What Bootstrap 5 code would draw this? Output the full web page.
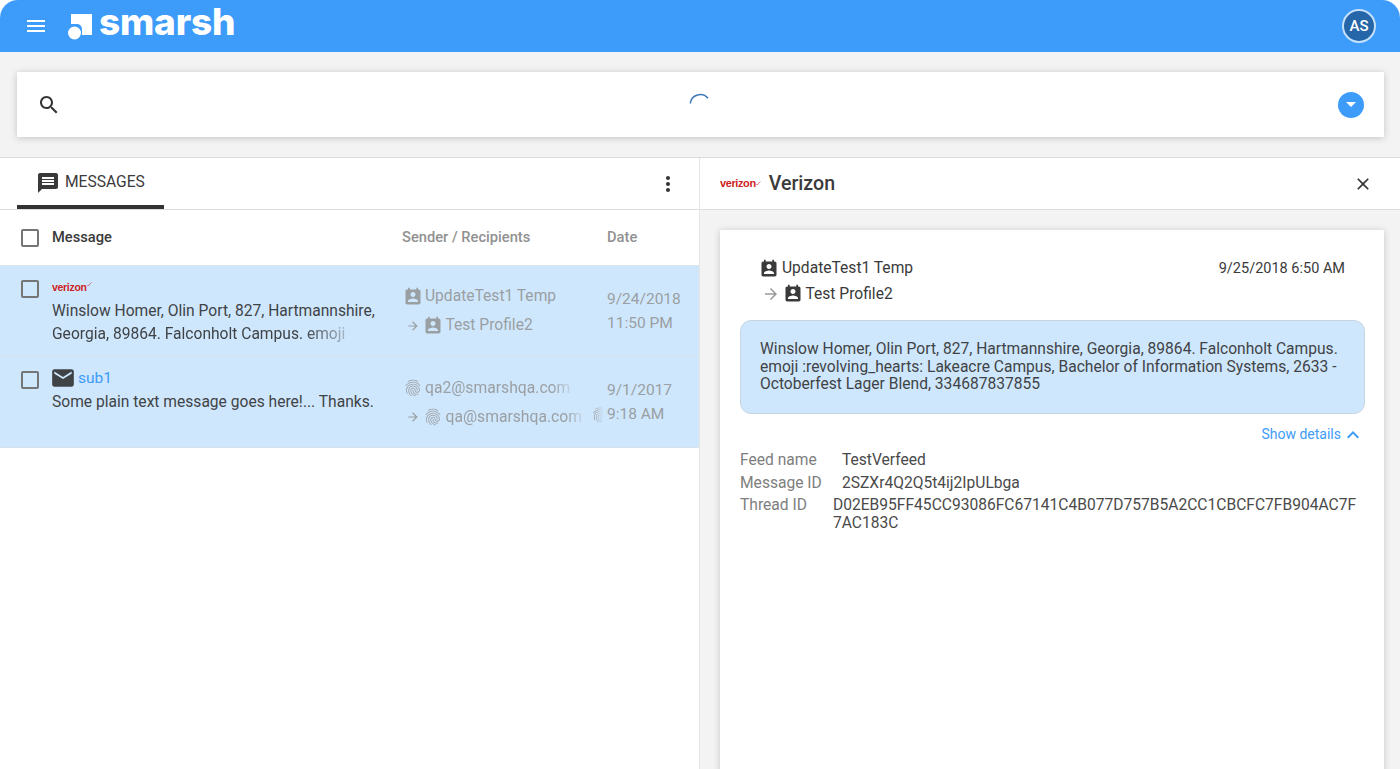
<!DOCTYPE html>
<html lang="en">
<head>
<meta charset="utf-8">
<title>Smarsh</title>
<link href="https://cdn.jsdelivr.net/npm/bootstrap@5.3.0/dist/css/bootstrap.min.css" rel="stylesheet">
<style>
html,body{height:100%}
body{font-family:Roboto,"Liberation Sans",sans-serif;color:#3a3a3a;background:#fff;overflow:hidden;font-size:15.6px}
.app-shell{height:769px}
.top-bar{height:52px;background:#3d9bf9;border-radius:18px 18px 0 0;padding:0 24px;flex:none}
.ic{fill:currentColor;flex:none;display:block}
.brand-mark{margin-left:20px}
.brand-text{font-family:Inter,sans-serif;font-weight:800;font-size:37px;line-height:1;color:#fff;margin-left:7px;letter-spacing:-.2px;position:relative;top:-5px}
.user-chip{width:34px;height:34px;border-radius:50%;background:#2566a8;border:2px solid #c5e0fb;color:#fff;font-weight:500;font-size:15px}
.search-zone{background:#f3f3f3;height:106px;padding:20px 16px 20px 17px;border-bottom:1px solid #dcdcdc;flex:none}
.search-card{height:65px;background:#fff;box-shadow:0 1px 7px rgba(0,0,0,.2);padding:0 20px}
.spin-wrap{margin-top:-1px}
.drop-btn{width:26px;height:26px;border-radius:50%;background:#3d9bf9}
.drop-tri{width:0;height:0;border-left:5px solid transparent;border-right:5px solid transparent;border-top:5px solid #fff}
.work-area{flex:1;min-height:0}
.list-pane{height:100%;background:#fff;border-right:1px solid #e6e6e6}
.pane-head{height:52px;border-bottom:1px solid #dcdcdc}
.tab-item{margin-left:17px;width:147px;height:51px;border-bottom:4px solid #333;padding:2px 0 0 19px;gap:5px;color:#3a3a3a}
.kebab{margin:14px 19px 0 0;color:#333}
.col-head{height:56px;font-size:14.7px;font-weight:500;color:#919191;border-bottom:1px solid #dfe6ea}
.col-first{color:#3a3a3a}
.tick-box{width:18px;height:18px;border:2px solid #757575;border-radius:2px;flex:none;margin-left:21px;margin-right:13px}
.c-msg{width:350px;flex:none}
.c-who{width:205px;flex:none}
.msg-row{height:91px;background:#cfe7fd;border-bottom:1px solid #d7e0e8;padding-top:14px;line-height:23px;color:#3f4346}
.msg-top{height:20px}
.mini-vz{font-family:"Liberation Sans",sans-serif;font-weight:700;color:#cd1f25;font-size:10.5px;letter-spacing:-.3px;line-height:1}
.msg-top .mini-vz{margin-top:2px}
.big-vz{font-size:11px;letter-spacing:-.4px}
.vz-tick{margin-top:2px}
.mail-ic{margin:-6px 0 0 -2px}
.sub-link{color:#3d9bf9;font-size:15.5px;margin-left:2px;line-height:14px}
.fade-a{display:inline-block;-webkit-mask-image:linear-gradient(90deg,#000 86%,rgba(0,0,0,.3));mask-image:linear-gradient(90deg,#000 86%,rgba(0,0,0,.3))}
.fade-b{display:inline-block;font-size:15.7px;-webkit-mask-image:linear-gradient(90deg,#000 88%,rgba(0,0,0,.25));mask-image:linear-gradient(90deg,#000 88%,rgba(0,0,0,.25))}
.c-who-cell{color:#9a9fa3;padding-left:1px;padding-top:2px}
.who-line{height:29px}
.who-icon{margin-right:2px}
.who-next{margin-right:3px}
.who-line .arrow-slot{margin-left:3px;margin-right:2.5px}
.date-cell{color:#9a9fa3;font-size:15.5px;padding-top:7px;position:relative;line-height:24px}
.fp-ghost{position:absolute;left:-16px;top:35px;width:12px;overflow:hidden;-webkit-mask-image:linear-gradient(90deg,#000 30%,rgba(0,0,0,.1));mask-image:linear-gradient(90deg,#000 30%,rgba(0,0,0,.1))}
.detail-pane{height:100%;background:#f3f3f3}
.detail-head{background:#fff;padding:0 27.5px 0 20px}
.detail-title{font-size:19.6px;font-weight:500;color:#3a3a3a;margin-left:8px}
.detail-card{background:#fff;margin:20px 16px 0 20px;height:559px;box-shadow:0 1px 7px rgba(0,0,0,.2);padding:26px 19px 0 20px}
.who-block{padding:0 20px 0 19px;height:64px;line-height:25.5px}
.who-when{font-size:14.5px;line-height:22px;padding-top:2px}
.card-icon{margin-right:3px}
.card-arrow{margin-left:3px;margin-right:2.5px}
.bubble{height:94px;background:#cfe7fd;border:1px solid #c6d5e2;border-radius:11px;padding:20px 19px 0;line-height:17.5px;color:#3f4346}
.more-link{color:#3d9bf9;font-size:14px;height:37px;padding-top:10px}
.more-link .ic{margin-top:-1px}
.facts{font-size:15.6px;line-height:17.5px;color:#4a4a4a;padding-top:1px}
.fact-row{margin-bottom:5px}
.fact-key{color:#7e7e7e;width:102px;flex:none}
.fact-key-s{width:93px}
.fact-val-wrap{width:530px;word-break:break-all}
</style>
</head>
<body>
<svg width="0" height="0" class="d-block position-absolute">
<defs>
<symbol id="i-menu" viewBox="0 0 24 24"><path d="M3 18h18v-2H3v2zm0-5h18v-2H3v2zm0-7v2h18V6H3z"/></symbol>
<symbol id="i-search" viewBox="0 0 24 24"><path d="M15.5 14h-.79l-.28-.27C15.41 12.59 16 11.11 16 9.5 16 5.91 13.09 3 9.5 3S3 5.91 3 9.5 5.91 16 9.5 16c1.61 0 3.09-.59 4.23-1.57l.27.28v.79l5 4.99L20.49 19l-4.99-5zm-6 0C7.01 14 5 11.99 5 9.5S7.01 5 9.5 5 14 7.01 14 9.5 11.99 14 9.5 14z"/></symbol>
<symbol id="i-msg" viewBox="0 0 24 24"><path d="M20 2H4c-1.1 0-1.99.9-1.99 2L2 22l4-4h14c1.1 0 2-.9 2-2V4c0-1.1-.9-2-2-2zm-2 12H6v-2h12v2zm0-3H6V9h12v2zm0-3H6V6h12v2z"/></symbol>
<symbol id="i-more" viewBox="0 0 24 24"><path d="M12 8c1.1 0 2-.9 2-2s-.9-2-2-2-2 .9-2 2 .9 2 2 2zm0 2c-1.1 0-2 .9-2 2s.9 2 2 2 2-.9 2-2-.9-2-2-2zm0 6c-1.1 0-2 .9-2 2s.9 2 2 2 2-.9 2-2-.9-2-2-2z"/></symbol>
<symbol id="i-close" viewBox="0 0 24 24"><path d="M19 6.41L17.59 5 12 10.59 6.41 5 5 6.41 10.59 12 5 17.59 6.41 19 12 13.41 17.59 19 19 17.59 13.41 12z"/></symbol>
<symbol id="i-mail" viewBox="0 0 24 24"><path d="M20 4H4c-1.1 0-1.99.9-1.99 2L2 18c0 1.1.9 2 2 2h16c1.1 0 2-.9 2-2V6c0-1.1-.9-2-2-2zm0 4l-8 5-8-5V6l8 5 8-5v2z"/></symbol>
<symbol id="i-person" viewBox="0 0 24 24"><path d="M19 3h-1V1h-2v2H8V1H6v2H5c-1.11 0-2 .9-2 2v14c0 1.1.89 2 2 2h14c1.1 0 2-.9 2-2V5c0-1.1-.9-2-2-2zm-7 3c1.66 0 3 1.34 3 3s-1.34 3-3 3-3-1.34-3-3 1.34-3 3-3zm6 12H6v-1c0-2 4-3.1 6-3.1s6 1.1 6 3.1v1z"/></symbol>
<symbol id="i-finger" viewBox="0 0 24 24"><path d="M17.81 4.47c-.08 0-.16-.02-.23-.06C15.66 3.42 14 3 12.01 3c-1.98 0-3.86.47-5.57 1.41-.24.13-.54.04-.68-.2-.13-.24-.04-.55.2-.68C7.82 2.52 9.86 2 12.01 2c2.13 0 3.99.47 6.03 1.52.25.13.34.43.21.67-.09.18-.26.28-.44.28zM3.5 9.72c-.1 0-.2-.03-.29-.09-.23-.16-.28-.47-.12-.7.99-1.4 2.25-2.5 3.75-3.27C9.98 4.04 14 4.03 17.15 5.65c1.5.77 2.76 1.86 3.75 3.25.16.22.11.54-.12.7-.23.16-.54.11-.7-.12-.9-1.26-2.04-2.25-3.39-2.94-2.87-1.47-6.54-1.47-9.4.01-1.36.7-2.5 1.7-3.4 2.96-.08.14-.23.21-.39.21zm6.25 12.07c-.13 0-.26-.05-.35-.15-.87-.87-1.34-1.43-2.01-2.64-.69-1.23-1.05-2.73-1.05-4.34 0-2.97 2.54-5.39 5.66-5.39s5.66 2.42 5.66 5.39c0 .28-.22.5-.5.5s-.5-.22-.5-.5c0-2.42-2.09-4.39-4.66-4.39-2.57 0-4.66 1.97-4.66 4.39 0 1.44.32 2.77.93 3.85.64 1.15 1.08 1.64 1.85 2.42.19.2.19.51 0 .71-.11.1-.24.15-.37.15zm7.17-1.85c-1.19 0-2.24-.3-3.1-.89-1.49-1.01-2.38-2.65-2.38-4.39 0-.28.22-.5.5-.5s.5.22.5.5c0 1.41.72 2.74 1.94 3.56.71.48 1.54.71 2.54.71.24 0 .64-.03 1.04-.1.27-.05.53.13.58.41.05.27-.13.53-.41.58-.57.11-1.07.12-1.21.12zM14.91 22c-.04 0-.09-.01-.13-.02-1.59-.44-2.63-1.03-3.72-2.1-1.4-1.39-2.17-3.24-2.17-5.22 0-1.62 1.38-2.94 3.08-2.94 1.7 0 3.08 1.32 3.08 2.94 0 1.07.93 1.94 2.08 1.94s2.08-.87 2.08-1.94c0-3.77-3.25-6.83-7.25-6.83-2.84 0-5.44 1.58-6.61 4.03-.39.81-.59 1.76-.59 2.8 0 .78.07 2.01.67 3.61.1.26-.03.55-.29.64-.26.1-.55-.04-.64-.29-.49-1.31-.73-2.61-.73-3.96 0-1.2.23-2.29.68-3.24 1.33-2.79 4.28-4.6 7.51-4.6 4.55 0 8.25 3.51 8.25 7.83 0 1.62-1.38 2.94-3.08 2.94s-3.08-1.32-3.08-2.94c0-1.07-.93-1.94-2.08-1.94s-2.08.87-2.08 1.94c0 1.71.66 3.31 1.87 4.51.95.94 1.86 1.46 3.27 1.85.27.07.42.35.35.61-.05.23-.26.38-.47.38z"/></symbol>
<symbol id="i-arrow" viewBox="0 0 24 24"><path d="M12 4l-1.41 1.41L16.17 11H4v2h12.17l-5.58 5.59L12 20l8-8z"/></symbol>
<symbol id="i-up" viewBox="0 0 24 24"><path d="M7.41 15.41L12 10.83l4.59 4.58L18 14l-6-6-6 6z"/></symbol>
<symbol id="i-tick" viewBox="0 0 10 10"><path d="M1 6l1.500 2L8.500 1" fill="none" stroke="#cd1f25" stroke-width="1.200"/></symbol>
</defs>
</svg>

<div class="app-shell d-flex flex-column">
  <header class="top-bar d-flex align-items-center">
    <svg class="ic text-white" width="24" height="24"><use href="#i-menu"/></svg>
    <svg class="brand-mark" width="24" height="27" viewBox="0 0 24 27"><path d="M3 1h21v21H14v-6a5 5 0 0 0-5-5H3z" fill="#fff"/><circle cx="6.500" cy="20" r="6.500" fill="#fff"/></svg>
    <span class="brand-text">smarsh</span>
    <div class="user-chip d-flex align-items-center justify-content-center ms-auto">AS</div>
  </header>

  <section class="search-zone">
    <div class="search-card d-flex align-items-center justify-content-between">
      <svg class="ic" width="24" height="24" color="#333"><use href="#i-search"/></svg>
      <svg class="spin-wrap" width="24" height="24" viewBox="0 0 24 24"><path d="M2.300 11.500A10 10 0 0 1 20 6.200" fill="none" stroke="#3d78bb" stroke-width="1.500"/></svg>
      <div class="drop-btn d-flex align-items-center justify-content-center"><span class="drop-tri"></span></div>
    </div>
  </section>

  <main class="row g-0 work-area">
    <div class="col-6">
      <div class="list-pane">
        <div class="pane-head d-flex align-items-start justify-content-between">
          <div class="tab-item d-flex align-items-center">
            <svg class="ic" width="24" height="24"><use href="#i-msg"/></svg><span>MESSAGES</span>
          </div>
          <svg class="ic kebab" width="24" height="24"><use href="#i-more"/></svg>
        </div>
        <div class="col-head d-flex align-items-center">
          <span class="tick-box"></span>
          <div class="c-msg col-first">Message</div>
          <div class="c-who">Sender / Recipients</div>
          <div>Date</div>
        </div>
        <div class="msg-row d-flex">
          <span class="tick-box"></span>
          <div class="c-msg">
            <div class="msg-top d-flex align-items-start"><span class="mini-vz">verizon</span><svg class="vz-tick" width="5" height="5"><use href="#i-tick"/></svg></div>
            <div class="text-nowrap">Winslow Homer, Olin Port, 827, Hartmannshire,</div>
            <div class="text-nowrap"><span class="fade-a">Georgia, 89864. Falconholt Campus. emoji</span></div>
          </div>
          <div class="c-who c-who-cell">
            <div class="who-line d-flex align-items-center"><svg class="ic who-icon" width="20" height="20"><use href="#i-person"/></svg>UpdateTest1 Temp</div>
            <div class="who-line d-flex align-items-center"><svg class="ic arrow-slot" width="14" height="14"><use href="#i-arrow"/></svg><svg class="ic who-next" width="20" height="20"><use href="#i-person"/></svg>Test Profile2</div>
          </div>
          <div class="date-cell">9/24/2018<br>11:50 PM</div>
        </div>
        <div class="msg-row d-flex">
          <span class="tick-box"></span>
          <div class="c-msg">
            <div class="msg-top d-flex align-items-start"><svg class="ic mail-ic" width="26" height="26"><use href="#i-mail"/></svg><span class="sub-link">sub1</span></div>
            <div class="text-nowrap">Some plain text message goes here!... Thanks.</div>
          </div>
          <div class="c-who c-who-cell">
            <div class="who-line d-flex align-items-center"><svg class="ic who-icon" width="20" height="20"><use href="#i-finger"/></svg><span class="fade-b">qa2@smarshqa.com</span></div>
            <div class="who-line d-flex align-items-center"><svg class="ic arrow-slot" width="14" height="14"><use href="#i-arrow"/></svg><svg class="ic who-next" width="20" height="20"><use href="#i-finger"/></svg><span class="fade-b">qa@smarshqa.com</span></div>
          </div>
          <div class="date-cell">
            <div class="fp-ghost"><svg class="ic" width="18" height="18"><use href="#i-finger"/></svg></div>
            9/1/2017<br>9:18 AM
          </div>
        </div>
      </div>
    </div>
    <div class="col-6">
      <div class="detail-pane">
        <div class="pane-head detail-head d-flex align-items-center">
          <span class="mini-vz big-vz">verizon</span><svg width="5" height="5"><use href="#i-tick"/></svg>
          <span class="detail-title">Verizon</span>
          <svg class="ic ms-auto" width="20" height="20" color="#333"><use href="#i-close"/></svg>
        </div>
        <div class="detail-card">
          <div class="who-block d-flex justify-content-between">
            <div>
              <div class="d-flex align-items-center"><svg class="ic card-icon" width="20" height="20"><use href="#i-person"/></svg>UpdateTest1 Temp</div>
              <div class="d-flex align-items-center"><svg class="ic card-arrow" width="18" height="18" color="#9a9a9a"><use href="#i-arrow"/></svg><svg class="ic card-icon" width="20" height="20"><use href="#i-person"/></svg>Test Profile2</div>
            </div>
            <div class="who-when">9/25/2018 6:50 AM</div>
          </div>
          <div class="bubble">Winslow Homer, Olin Port, 827, Hartmannshire, Georgia, 89864. Falconholt Campus. emoji :revolving_hearts: Lakeacre Campus, Bachelor of Information Systems, 2633 - Octoberfest Lager Blend, 334687837855</div>
          <div class="more-link d-flex justify-content-end align-items-start"><span>Show details</span><svg class="ic" width="24" height="24"><use href="#i-up"/></svg></div>
          <div class="facts">
            <div class="fact-row d-flex"><div class="fact-key">Feed name</div><div>TestVerfeed</div></div>
            <div class="fact-row d-flex"><div class="fact-key">Message ID</div><div>2SZXr4Q2Q5t4ij2IpULbga</div></div>
            <div class="fact-row d-flex"><div class="fact-key fact-key-s">Thread ID</div><div class="fact-val-wrap">D02EB95FF45CC93086FC67141C4B077D757B5A2CC1CBCFC7FB904AC7F7AC183C</div></div>
          </div>
        </div>
      </div>
    </div>
  </main>
</div>
<script src="https://cdn.jsdelivr.net/npm/bootstrap@5.3.0/dist/js/bootstrap.bundle.min.js"></script>
</body>
</html>
